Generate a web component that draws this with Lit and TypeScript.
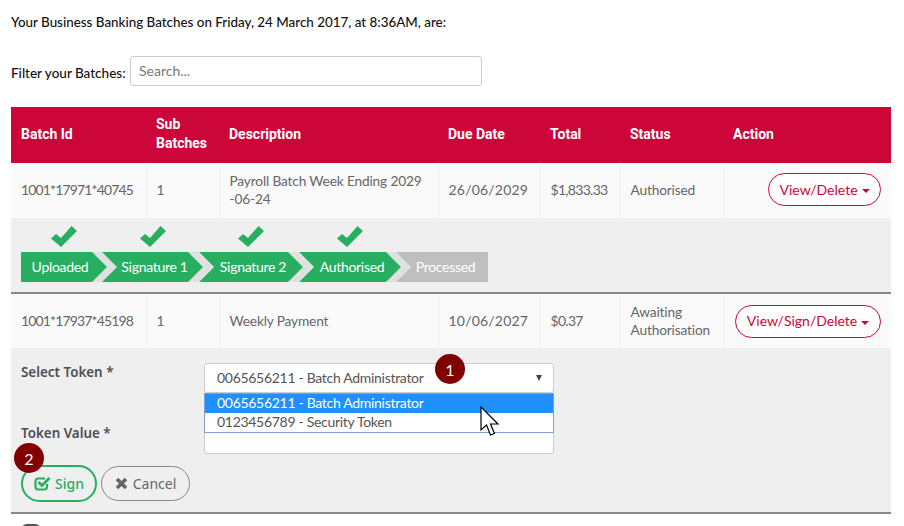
import { LitElement, html, css } from "lit";
import { customElement } from "lit/decorators.js";

const check = html`<svg class="check" width="26" height="21" viewBox="0 0 26 21"><path fill="#27ae60" d="M0 12.500 L5 8 L10 12 L20.500 0 L26 5 L10 21 Z"/></svg>`;
const caret = html`<i class="caret"></i>`;

@customElement("app-root")
export class AppRoot extends LitElement {
  static styles = css`
    :host { display: block; width: 904px; height: 526px; overflow: hidden; background: #fff; position: relative;
      font-family: "Lato", "Liberation Sans", sans-serif; font-size: 14px; color: #555; }
    .page { padding: 0 13px 0 11px; }
    .intro { margin: 0; padding-top: 12px; height: 56px; box-sizing: border-box; line-height: 20px; font-size: 13.4px; font-weight: 500; color: #111; }
    .filter { display: flex; align-items: center; gap: 2px; height: 30px; margin-bottom: 21px; font-size: 13.5px; color: #111; }
    .filter label { font-weight: 500; padding-top: 3px; width: 117px; white-space: nowrap; }
    .search { width: 352px; height: 30px; box-sizing: border-box; border: 1px solid #ccc; border-radius: 3px; padding: 0 8px 2px; font-size: 14px; color: #777; display: flex; align-items: center; }
    table { width: 880px; border-collapse: collapse; table-layout: fixed; }
    thead th { background: #cc0638; color: #fff; height: 56px; padding: 0 9px 2px 10px; text-align: left; box-sizing: border-box;
      font-family: "Roboto", "Noto Sans", sans-serif; font-weight: 700; font-size: 14px; line-height: 19px; }
    tbody td.c { box-sizing: border-box; background: #fafafa; border-left: 1px solid #f3f3f3; padding: 0 10px; line-height: 18px; font-size: 13.7px; letter-spacing: -0.15px; color: #666; white-space: nowrap; }
    tbody td.c:first-child { border-left: 0; }
    tbody td.id { font-size: 14px; letter-spacing: -0.85px; }
    tbody td.date { font-size: 14px; letter-spacing: 0.2px; }
    tbody td.total { font-size: 14px; letter-spacing: -0.7px; }
    .r1 td { height: 55px; } .r2 td { height: 54px; }
    tbody .r1 td.c { padding-bottom: 2px; }
    td.action { text-align: right; }
    .pill { display: inline-flex; align-items: center; justify-content: center; height: 33px; box-sizing: border-box; border: 1px solid #cc0638; border-radius: 17px; color: #cc0638; padding: 0 12px; font-size: 14px; letter-spacing: 0; background: #fff; }
    .pill.view { width: 113px; } .pill.sign-pill { width: 146px; }
    .caret { display: inline-block; width: 0; height: 0; margin-left: 4px; margin-top: 3px; border-top: 4px solid currentColor; border-left: 4px solid transparent; border-right: 4px solid transparent; }
    td.panel { background: #efefef; padding: 0; }
    .steps-panel { height: 74px; padding: 8px 10px 0; box-sizing: border-box; }
    .sep td { height: 2px; padding: 0; background: #888; }
    .steps { display: flex; }
    .step { display: flex; flex-direction: column; align-items: center; margin-right: -4px; }
    .step.tight { margin-right: -5px; }
    .step:last-child { margin-right: 0; }
    .check { display: block; height: 21px; margin-bottom: 5px; }
    .spacer { height: 26px; }
    .arrow { position: relative; height: 30px; display: flex; align-items: center; justify-content: center; align-self: stretch; box-sizing: border-box; color: #fff; font-size: 14px; letter-spacing: -0.3px; padding: 0 0 2px 4px; white-space: nowrap; }
    .arrow .band { position: absolute; top: 0; bottom: 0; right: -10px; width: 25px; background: #e0e0e0; clip-path: polygon(0 0, 10px 0, 100% 50%, 10px 100%, 0 100%, 15px 50%); }
    .arrow .fill { position: absolute; inset: 0; background: #27ae60; clip-path: polygon(0 0, calc(100% - 15px) 0, 100% 50%, calc(100% - 15px) 100%, 0 100%, 15px 50%); }
    .arrow span { position: relative; }
    .first .arrow { padding: 0 8px 2px 0; }
    .first .arrow .fill { clip-path: polygon(0 0, calc(100% - 15px) 0, 100% 50%, calc(100% - 15px) 100%, 0 100%); }
    .arrow.off { padding-left: 7px; }
    .arrow.off .fill { background: #bfbfbf; clip-path: polygon(0 0, 100% 0, 100% 100%, 0 100%, 15px 50%); }
    .w1 { width: 86px; } .w2 { width: 101px; } .w3 { width: 104px; } .w4 { width: 102px; } .w5 { width: 92px; }
    .form-panel { height: 164px; box-sizing: border-box; padding: 15px 10px 0; position: relative; }
    .form { display: grid; grid-template-columns: 183px 350px; grid-template-rows: 61px 30px; }
    .lab { font-family: "Noto Sans", "Roboto", sans-serif; font-weight: 600; font-size: 13.4px; color: #4d4d55; line-height: 18px; }
    .selectwrap { position: relative; }
    .select { height: 30px; box-sizing: border-box; background: #fff; border: 1px solid #ccc; border-radius: 3px; padding: 0 12px 2px; display: flex; align-items: center; justify-content: space-between; font-size: 14px; letter-spacing: -0.3px; color: #555; }
    .select i { width: 0; height: 0; border-top: 6px solid #444; border-left: 3px solid transparent; border-right: 3px solid transparent; margin-right: -1px; margin-top: 2px; }
    .list { position: absolute; left: 0; right: 0; top: 30px; z-index: 2; background: #fff; border: 1px solid #7f9fd6; box-sizing: border-box; height: 40px; font-size: 14px; letter-spacing: -0.3px; color: #555; }
    .opt { height: 19px; line-height: 17px; padding: 0 12px; }
    .opt.sel { background: #1e90ff; color: #fff; }
    .input { height: 30px; width: 350px; box-sizing: border-box; background: #fff; border: 1px solid #ccc; border-radius: 3px; }
    .buttons { display: flex; align-items: center; gap: 4px; margin-top: 11px; font-family: "Noto Sans", "Roboto", sans-serif; font-size: 14px; }
    .btn { display: inline-flex; align-items: center; gap: 5px; box-sizing: border-box; border-radius: 19px; }
    .sign { width: 76px; height: 37px; border: 2px solid #27ae60; color: #27ae60; justify-content: center; font-weight: 500; gap: 4px; }
    .cancel { width: 89px; height: 35px; border: 1px solid #888; color: #666; justify-content: center; }
    .badge { position: absolute; width: 30px; height: 30px; border-radius: 50%; background: #800000; color: #fff; display: flex; align-items: center; justify-content: center; font-size: 16px; z-index: 3; }
    .b1 { left: 435px; top: 354px; } .b2 { left: 14px; top: 443px; }
    .cursor { position: absolute; left: 480px; top: 406px; z-index: 4; }
    .trash { position: absolute; left: 21px; top: 524px; width: 20px; height: 6px; border-top: 2px solid #555; border-radius: 6px 6px 0 0; box-sizing: border-box; }
  `;

  private step(label: string, w: string, extra = "", done = true) {
    return html`<div class="step ${w} ${extra}">
      ${done ? check : html`<div class="spacer"></div>`}
      <div class="arrow ${done ? "" : "off"}">${done ? html`<div class="band"></div>` : ""}<div class="fill"></div><span>${label}</span></div>
    </div>`;
  }

  render() {
    return html`
      <div class="page">
        <p class="intro">Your Business Banking Batches on Friday, 24 March 2017, at 8:36AM, are:</p>
        <div class="filter"><label>Filter your Batches:</label><div class="search">Search...</div></div>
        <table>
          <colgroup><col style="width:135px"/><col style="width:73px"/><col style="width:219px"/><col style="width:102px"/><col style="width:80px"/><col style="width:103px"/><col style="width:168px"/></colgroup>
          <thead><tr><th>Batch Id</th><th>Sub Batches</th><th>Description</th><th>Due Date</th><th>Total</th><th>Status</th><th>Action</th></tr></thead>
          <tbody>
            <tr class="r1"><td class="c id">1001*17971*40745</td><td class="c">1</td><td class="c">Payroll Batch Week Ending 2029<br/>-06-24</td><td class="c date">26/06/2029</td><td class="c total">$1,833.33</td><td class="c">Authorised</td><td class="c action"><span class="pill view">View/Delete ${caret}</span></td></tr>
            <tr><td class="panel" colspan="7"><div class="steps-panel"><div class="steps">
              ${this.step("Uploaded", "w1", "first tight")}${this.step("Signature 1", "w2")}${this.step("Signature 2", "w3")}${this.step("Authorised", "w4", "tight")}${this.step("Processed", "w5", "", false)}
            </div></div></td></tr>
            <tr class="sep"><td colspan="7"></td></tr>
            <tr class="r2"><td class="c id">1001*17937*45198</td><td class="c">1</td><td class="c">Weekly Payment</td><td class="c date">10/06/2027</td><td class="c total">$0.37</td><td class="c">Awaiting<br/>Authorisation</td><td class="c action"><span class="pill sign-pill">View/Sign/Delete ${caret}</span></td></tr>
            <tr><td class="panel" colspan="7"><div class="form-panel">
              <div class="form">
                <div class="lab">Select Token *</div>
                <div class="selectwrap">
                  <div class="select"><span>0065656211 - Batch Administrator</span><i></i></div>
                  <div class="list"><div class="opt sel">0065656211 - Batch Administrator</div><div class="opt">0123456789 - Security Token</div></div>
                </div>
                <div class="lab">Token Value *</div>
                <div class="input"></div>
              </div>
              <div class="buttons">
                <div class="btn sign"><svg width="17" height="15" viewBox="0 0 17 15"><path fill="none" stroke="#27ae60" stroke-width="2.200" d="M13 8v3a2.500 2.500 0 0 1-2.500 2.500H4A2.500 2.500 0 0 1 1.500 11V5A2.500 2.500 0 0 1 4 2.500H11"/><path fill="none" stroke="#27ae60" stroke-width="2.800" d="M4.500 6 L8 9.500 L15.500 2"/></svg>Sign</div>
                <div class="btn cancel"><svg width="13" height="13" viewBox="0 0 13 13"><path stroke="#666" stroke-width="3.600" d="M2 2 L11 11 M11 2 L2 11"/></svg>Cancel</div>
              </div>
            </div></td></tr>
            <tr class="sep"><td colspan="7"></td></tr>
          </tbody>
        </table>
      </div>
      <div class="badge b1">1</div>
      <div class="badge b2">2</div>
      <svg class="cursor" width="20" height="32" viewBox="0 0 20 32"><path fill="#fff" stroke="#000" stroke-width="1.200" d="M1 1 V24 L6.500 19 L10.500 29 L14.500 27.500 L10.500 18 H18 Z"/></svg>
      <div class="trash"></div>
    `;
  }
}
